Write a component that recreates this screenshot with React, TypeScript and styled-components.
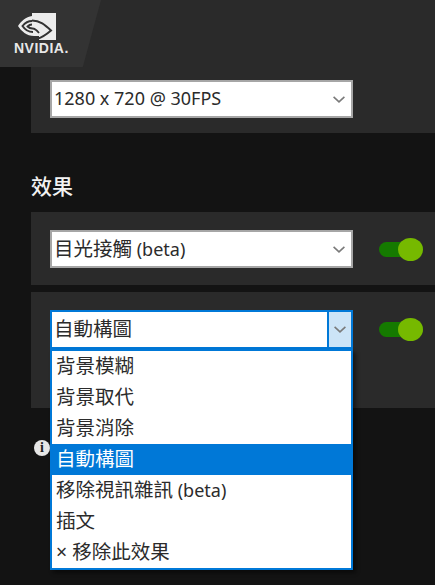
import { createGlobalStyle, styled } from 'styled-components'

const GlobalStyle = createGlobalStyle`
    html, body {
        margin: 0;
        padding: 0;
        background-color: #131313;
    }
    body {
        font-family: 'Noto Sans', 'Noto Sans CJK TC', sans-serif;
        overflow: hidden;
    }
`

const Page = styled.div`
    position: relative;
    width: 435px;
    height: 585px;
    box-sizing: border-box;
    padding-left: 31px;
    overflow: hidden;
    display: flex;
    flex-direction: column;
`

const LogoTab = styled.div`
    position: absolute;
    top: 0;
    left: 0;
    width: 101px;
    height: 67px;
    background-color: #333333;
    clip-path: polygon(0 0, 100% 0, 82% 100%, 0 100%);
    display: flex;
    flex-direction: column;
    align-items: flex-start;
    padding: 13px 0 0 14px;
    box-sizing: border-box;
`

const LogoMark = styled.svg`
    margin-left: 4px;
`

const LogoText = styled.span`
    font-family: 'Liberation Sans', sans-serif;
    font-size: 14px;
    font-weight: 700;
    line-height: 13px;
    letter-spacing: 0.5px;
    color: #e8e8e8;
    margin-top: 2px;
`

const TopCard = styled.section`
    background-color: #2a2a2a;
    height: 133px;
    box-sizing: border-box;
    padding: 80px 0 0 19px;
`

const Heading = styled.h2`
    margin: 38px 0 11px;
    font-size: 21px;
    line-height: 30px;
    font-weight: 500;
    color: #f2f2f2;
`

const EffectCard = styled.section<{ $height: number }>`
    position: relative;
    height: ${(p) => p.$height}px;
    box-sizing: border-box;
    background-color: #2a2a2a;
    padding: 18px 0 0 19px;
    margin-bottom: 7px;
    display: flex;
    align-items: flex-start;
    gap: 26px;
`

const SelectBox = styled.div<{ $open?: boolean }>`
    width: 303px;
    height: ${(p) => (p.$open ? 39 : 38)}px;
    box-sizing: border-box;
    flex: none;
    display: flex;
    align-items: stretch;
    background-color: #ffffff;
    border: 2px solid ${(p) => (p.$open ? '#0078d7' : '#a6a6a6')};
`

const SelectText = styled.span`
    flex: 1;
    padding-left: 2px;
    font-size: 18px;
    line-height: 33px;
    color: #2b2b2b;
    white-space: nowrap;
`

const Cjk = styled.span`
    font-size: 19.5px;
`

const Arrow = styled.span<{ $open?: boolean }>`
    width: 24px;
    flex: none;
    display: flex;
    align-items: center;
    justify-content: center;
    background-color: ${(p) => (p.$open ? '#cce4f7' : 'transparent')};
    border-left: ${(p) => (p.$open ? '2px solid #0078d7' : 'none')};
    box-sizing: border-box;
`

const Toggle = styled.div`
    position: relative;
    width: 44px;
    height: 15px;
    margin-top: 12px;
    border-radius: 8px;
    background-color: #157a00;
`

const Thumb = styled.span`
    position: absolute;
    top: -4px;
    right: 0;
    width: 25px;
    height: 23px;
    border-radius: 50%;
    background-color: #76b900;
`

const Dropdown = styled.ul`
    position: absolute;
    top: 57px;
    left: 19px;
    width: 303px;
    box-sizing: border-box;
    margin: 0;
    padding: 0;
    list-style: none;
    background-color: #ffffff;
    border: 2px solid #0078d7;
    box-shadow: 3px 3px 4px rgba(0, 0, 0, 0.45);
    z-index: 2;
`

const Option = styled.li<{ $selected?: boolean }>`
    height: 31px;
    padding-left: 4px;
    font-size: 18px;
    line-height: 30px;
    white-space: nowrap;
    color: ${(p) => (p.$selected ? '#ffffff' : '#2b2b2b')};
    background-color: ${(p) => (p.$selected ? '#0078d7' : 'transparent')};
`

const InfoBadge = styled.span`
    margin: 25px 0 0 3px;
    width: 16px;
    height: 16px;
    border-radius: 50%;
    background-color: #e6e6e6;
    color: #222222;
    font-family: 'Liberation Serif', serif;
    font-size: 14px;
    font-weight: 700;
    line-height: 16px;
    text-align: center;
`

const Chevron = () => (
    <svg width="12" height="7" viewBox="0 0 12 7" fill="none">
        <path d="M0.6 0.8l5.4 5 5.4-5" stroke="#7a7a7a" strokeWidth="1.6" />
    </svg>
)

const NvidiaEye = () => (
    <LogoMark width="38" height="27" viewBox="0 0 38 27" fill="none">
        <path d="M14 0h24v27H21l-5-4C9 23 3 18 0 13 3 8 8 4 14 3z" fill="#ececec" />
        <path d="M14 23h7v4h-7z" fill="#333333" />
        <path d="M14 7.500C22 7.500 27 12 33 17.500 29 21 25 24 19 26" stroke="#333333" strokeWidth="2" />
        <path d="M14 8C10 8 6.500 10.500 4.500 13 6.500 16 10 19 15 19" stroke="#333333" strokeWidth="2" />
        <path d="M14 11.500C12 11.500 10.500 12.500 9.500 13.500 11 15 12.500 15.500 14.500 15.500 17 15.500 19 17.500 21 20" stroke="#333333" strokeWidth="1.800" />
    </LogoMark>
)

const options: [string, string][] = [
    ['背景模糊', ''],
    ['背景取代', ''],
    ['背景消除', ''],
    ['自動構圖', ''],
    ['移除視訊雜訊', ' (beta)'],
    ['插文', ''],
    ['× 移除此效果', ''],
]

const App = () => {
    return (
        <Page>
            <GlobalStyle />
            <LogoTab>
                <NvidiaEye />
                <LogoText>NVIDIA.</LogoText>
            </LogoTab>
            <TopCard>
                <SelectBox>
                    <SelectText>1280 x 720 @ 30FPS</SelectText>
                    <Arrow>
                        <Chevron />
                    </Arrow>
                </SelectBox>
            </TopCard>
            <Heading>效果</Heading>
            <EffectCard $height={73}>
                <SelectBox>
                    <SelectText>
                        <Cjk>目光接觸</Cjk> (beta)
                    </SelectText>
                    <Arrow>
                        <Chevron />
                    </Arrow>
                </SelectBox>
                <Toggle>
                    <Thumb />
                </Toggle>
            </EffectCard>
            <EffectCard $height={116}>
                <SelectBox $open>
                    <SelectText>
                        <Cjk>自動構圖</Cjk>
                    </SelectText>
                    <Arrow $open>
                        <Chevron />
                    </Arrow>
                </SelectBox>
                <Toggle>
                    <Thumb />
                </Toggle>
                <Dropdown>
                    {options.map(([label, suffix]) => (
                        <Option key={label} $selected={label === '自動構圖'}>
                            <Cjk>{label}</Cjk>
                            {suffix}
                        </Option>
                    ))}
                </Dropdown>
            </EffectCard>
            <InfoBadge>i</InfoBadge>
        </Page>
    )
}

export default App
